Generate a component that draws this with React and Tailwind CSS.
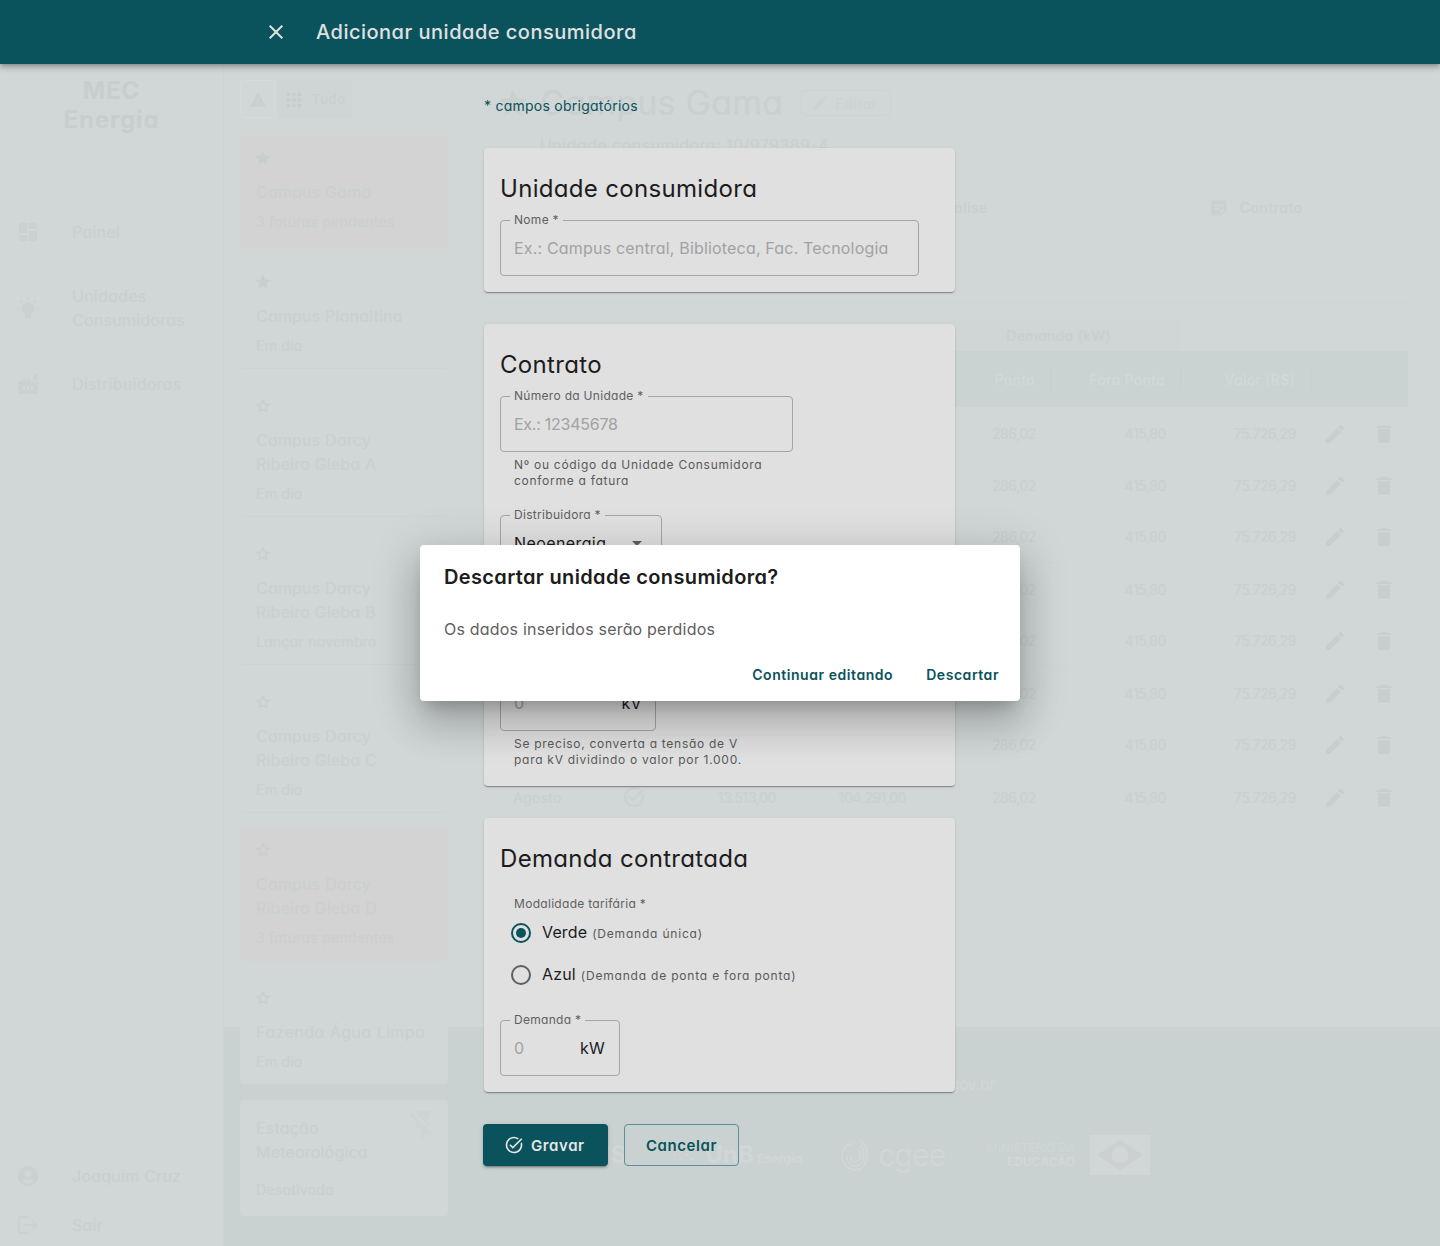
import React from "react";
import {
  MdDashboard, MdWbIncandescent, MdFactory, MdAccountCircle, MdLogout, MdWarning, MdApps, MdStar, MdStarBorder,
  MdFlashOff, MdEdit, MdDelete, MdStickyNote2, MdTaskAlt, MdClose, MdArrowDropDown, MdBarChart, MdReceiptLong,
} from "react-icons/md";

function NavItem({ icon, children, className = "" }) {
  return (
    <div className={`flex items-center pl-[16px] ${className}`}>
      <span className="w-[56px] shrink-0 text-[#cbd0d0]">{icon}</span>
      <span className="text-[16px] leading-[24px] tracking-[0.25px] text-[#cacfcf]">{children}</span>
    </div>
  );
}

function Sidebar() {
  return (
    <aside className="w-[224px] shrink-0 h-full flex flex-col border-r border-[#ced3d3]">
      <div className="pt-[76px] text-center text-[24px] leading-[29px] font-bold tracking-[0.9px] text-[#c8cdcd]">
        MEC<br />Energia
      </div>
      <NavItem className="mt-[86px]" icon={<MdDashboard className="text-[24px]" />}>Painel</NavItem>
      <NavItem className="mt-[40px]" icon={<MdWbIncandescent className="text-[24px] rotate-180" />}>Unidades<br />Consumidoras</NavItem>
      <NavItem className="mt-[40px]" icon={<MdFactory className="text-[24px]" />}>Distribuidoras</NavItem>
      <div className="flex-1" />
      <NavItem icon={<MdAccountCircle className="text-[24px]" />}>Joaquim Cruz</NavItem>
      <NavItem className="mt-[25px] mb-[9px]" icon={<MdLogout className="text-[24px]" />}>Sair</NavItem>
    </aside>
  );
}

function UnitCard({ icon, names, status, pink, line, className = "" }) {
  return (
    <div className={`px-4 rounded ${pink ? "bg-[#d3d3d3]" : ""} ${line ? "border-b border-[#cdd2d2]" : ""} ${className}`}>
      <div className="h-[20px] pt-[1px] text-[#c8cece] text-[18px] -ml-[2px]">{icon}</div>
      <div className="mt-[12px] text-[16px] leading-[24px] tracking-[0.2px] text-[#cacfcf]">
        {names.map((n) => (<div key={n}>{n}</div>))}
      </div>
      <div className="mt-[8px] text-[14px] leading-[20px] tracking-[0.25px] text-[#cacfcf]">{status}</div>
    </div>
  );
}

function UnitList() {
  return (
    <div className="relative z-10 w-[224px] shrink-0 pl-4 h-full">
      <div className="pt-[80px] flex h-[118px]">
        <div className="w-[36px] h-[38px] pt-[1px] border border-[#d6dada] rounded flex items-center justify-center">
          <MdWarning className="text-[18px] text-[#cacfcf]" />
        </div>
        <div className="w-[76px] h-[38px] pt-[2px] bg-[#cfd5d4] rounded flex items-center pl-[7px] gap-[7px]">
          <MdApps className="text-[22px] text-[#c6cecc]" />
          <span className="text-[13px] font-medium tracking-[0.6px] text-[#c8cfce]">Tudo</span>
        </div>
      </div>
      <div className="mt-[18px] flex flex-col">
        <UnitCard pink className="h-[112px] pt-[12px]" icon={<MdStar />} names={["Campus Gama"]} status="3 faturas pendentes" />
        <UnitCard line className="mt-[12px] h-[109px] pt-[12px]" icon={<MdStar />} names={["Campus Planaltina"]} status="Em dia" />
        <UnitCard line className="mt-[16px] h-[132px] pt-[11px]" icon={<MdStarBorder />} names={["Campus Darcy", "Ribeiro Gleba A"]} status="Em dia" />
        <UnitCard line className="mt-[16px] h-[132px] pt-[11px]" icon={<MdStarBorder />} names={["Campus Darcy", "Ribeiro Gleba B"]} status="Lançar novembro" />
        <UnitCard line className="mt-[16px] h-[132px] pt-[11px]" icon={<MdStarBorder />} names={["Campus Darcy", "Ribeiro Gleba C"]} status="Em dia" />
        <UnitCard pink className="mt-[15px] h-[133px] pt-[12px]" icon={<MdStarBorder />} names={["Campus Darcy", "Ribeiro Gleba D"]} status="3 faturas pendentes" />
        <div className="mt-[16px] h-[107px] pt-[12px] px-4 rounded bg-[#d1d6d6]">
          <MdStarBorder className="text-[18px] text-[#c8cece] -ml-[2px]" />
          <div className="mt-[13px] text-[16px] leading-[24px] tracking-[0.45px] text-[#cacfcf] whitespace-nowrap">Fazenda Água Limpa</div>
          <div className="mt-[8px] text-[14px] leading-[20px] tracking-[0.25px] text-[#cacfcf]">Em dia</div>
        </div>
        <div className="relative mt-[16px] h-[116px] pt-[16px] px-4 rounded bg-[#d1d6d6]">
          <MdFlashOff className="absolute right-[6px] top-[8px] text-[36px] text-[#ced4d4]" />
          <div className="text-[16px] leading-[24px] tracking-[0.2px] text-[#cacfcf]">Estação<br />Meteorológica</div>
          <div className="mt-[16px] text-[14px] leading-[20px] tracking-[0.25px] text-[#cacfcf]">Desativada</div>
        </div>
      </div>
    </div>
  );
}

const cols = "grid grid-cols-[115px_70px_122px_130px_130px_130px_130px_97px]";

function Row({ month, line }) {
  return (
    <div className={`${cols} h-[52px] items-center text-[14px] tracking-[-0.4px] text-[#cacfcf] ${line ? "border-b border-[#cfd4d4]" : ""}`}>
      <div className="pl-[29px] tracking-[0.3px]">{month}</div>
      <div className="flex justify-center"><MdTaskAlt className="text-[24px] text-[#cbd0d0]" /></div>
      <div className="text-right pr-[15px]">13.513,00</div>
      <div className="text-right pr-[15px]">104.291,00</div>
      <div className="text-right pr-[15px]">286,02</div>
      <div className="text-right pr-[15px]">415,80</div>
      <div className="text-right pr-[15px]">75.726,29</div>
      <div className="flex pt-[1px] pl-[12px] gap-[25px] text-[24px] text-[#c8cdcd]"><MdEdit /><MdDelete /></div>
    </div>
  );
}

function MainBg() {
  const months = ["Janeiro", "Fevereiro", "Março", "Abril", "Maio", "Junho", "Julho", "Agosto"];
  return (
    <main className="flex-1 pl-[36px] pr-[32px]">
      <div className="pt-[84px] flex items-center h-[122px] pl-[12px]">
        <MdStar className="text-[34px] text-[#cacfcf]" />
        <span className="ml-[10px] text-[34px] leading-[38px] tracking-[0.25px] text-[#cacfcf]">Campus Gama</span>
        <span className="ml-[18px] w-[90px] h-[26px] border border-[#cdd2d2] rounded flex items-center pl-[9px] gap-[6px] text-[14px] font-medium tracking-[0.5px] text-[#cdd2d2]">
          <MdEdit className="text-[18px]" />Editar
        </span>
      </div>
      <div className="mt-[12px] pl-[56px] text-[16px] leading-[22px] tracking-[0.45px] text-[#cacfcf]">Unidade consumidora: 10/979389-4</div>
      <div className="mt-[28px] h-[46px] pt-[2px] border-b border-[#cfd4d4] flex items-center text-[14px] font-medium tracking-[0.5px] text-[#cacfcf]">
        <span className="ml-[30px] flex items-center gap-2"><MdReceiptLong className="text-[20px]" />Faturas</span>
        <span className="ml-[310px] flex items-center gap-2"><MdBarChart className="text-[20px]" />Análise</span>
        <span className="ml-[221px] flex items-center gap-[11px]"><MdStickyNote2 className="text-[20px]" />Contrato</span>
      </div>
      <div className="h-[74px] border-b border-[#cfd4d4]" />
      <div className="mt-[15px] flex h-[32px]">
        <div className="w-[697px] h-full bg-[#d0d5d5] flex items-center justify-end pr-[70px] text-[14px] font-medium tracking-[0.3px] text-[#cacfcf]">Demanda (kW)</div>
      </div>
      <div className={`${cols} h-[56px] items-center bg-[#c9d3d1] text-[14px] font-medium tracking-[0.3px] text-[#d3d9d8]`}>
        <div className="pl-[29px]">Mês</div>
        <div />
        <div className="text-right pr-[15px] border-r border-[#c4cecc]">Medido</div>
        <div className="text-right pr-[15px] border-r border-[#c4cecc]">Fora</div>
        <div className="text-right pr-[15px] border-r border-[#c4cecc]">Ponta</div>
        <div className="text-right pr-[15px] border-r border-[#c4cecc]">Fora Ponta</div>
        <div className="text-right pr-[15px] border-r border-[#c4cecc]">Valor (R$)</div>
        <div />
      </div>
      {months.map((m, i) => (<Row key={m} month={m} line={i === 2 || i === 4 || i === 6} />))}
    </main>
  );
}

function Footer() {
  return (
    <footer className="flex-1 bg-[#c9d2d1] flex flex-col items-center">
      <div className="mt-[46px] w-[326px] text-[15px] leading-[24px] whitespace-nowrap flex justify-end text-[#d2d7d7]">Contato: mec-energia@unb.gov.br</div>
      <div className="mt-[34px] h-[48px] w-[636px] flex items-center text-[#d1d7d6]">
        <span className="w-[116px] text-[24px] font-bold text-right">LAPPIS</span>
        <svg viewBox="0 0 26 14" className="w-[26px] h-[14px] ml-[46px]" fill="currentColor">
          <circle cx="3" cy="7" r="1.3" /><circle cx="9" cy="3" r="1.3" /><circle cx="9" cy="11" r="1.3" /><circle cx="15" cy="7" r="1.3" /><circle cx="21" cy="3" r="1.3" /><circle cx="21" cy="11" r="1.3" />
        </svg>
        <span className="ml-[8px] text-[24px] font-bold">UnB</span>
        <span className="ml-[3px] mt-[8px] w-[50px] text-[12px] font-bold">Energia</span>
        <svg viewBox="0 0 30 32" className="w-[30px] h-[32px] ml-[36px]" fill="none" stroke="currentColor" strokeWidth="1.6">
          <path d="M20 1 C29 8 30 24 19 31 C8 33 1 26 1 16 C2 9 6 5 11 4" />
          <path d="M20 6 C25 12 25 22 18 27 C11 29 6 24 6 17" />
          <path d="M19 11 C21 15 20 21 16 23 C12 24 10 21 10 18" />
        </svg>
        <span className="ml-[8px] w-[78px] text-[30px] leading-[40px] font-light tracking-[-0.6px]">cgee</span>
        <span className="ml-[30px] w-[94px] text-right text-[12px] leading-[14px]">
          <span className="block whitespace-nowrap font-light">MINISTÉRIO DA</span>
          <span className="block font-bold">EDUCAÇÃO</span>
        </span>
        <span className="ml-[15px] w-[60px] h-[40px] bg-[#d2d6d6] flex items-center justify-center">
          <svg viewBox="0 0 60 40" className="w-[60px] h-[40px]">
            <path d="M30 5 L53 20 L30 35 L7 20 Z" fill="#c9d2d1" />
            <circle cx="30" cy="20" r="8.5" fill="#d2d6d6" />
          </svg>
        </span>
      </div>
    </footer>
  );
}

function Field({ label, className = "", children }) {
  return (
    <div className={`relative h-[56px] border border-[#a5a5a5] rounded flex items-center pl-[13px] ${className}`}>
      <span className="absolute left-[9px] -top-[10px] bg-[#e0e0e0] px-[4px] text-[12px] leading-[18px] tracking-[0.3px] text-[#5f5f5f] whitespace-nowrap">{label}</span>
      {children}
    </div>
  );
}

const helper = "pl-[14px] mt-[5px] text-[12px] leading-[16px] tracking-[0.72px] text-[#5a5a5a]";
const cardCls = "bg-[#e0e0e0] rounded px-4 shadow-[0_2px_1px_-1px_rgba(0,0,0,0.2),0_1px_1px_0_rgba(0,0,0,0.14),0_1px_3px_0_rgba(0,0,0,0.12)]";
const titleCls = "text-[24px] leading-[32px] tracking-[0.32px] text-[#1c1c1c]";

function Radio({ checked, name, note }) {
  return (
    <div className="h-[42px] flex items-center pl-[11px]">
      <span className={`w-[20px] h-[20px] rounded-full border-2 flex items-center justify-center ${checked ? "border-[#0a525c]" : "border-[#5f5f5f]"}`}>
        {checked && <span className="w-[10px] h-[10px] rounded-full bg-[#0a525c]" />}
      </span>
      <span className="ml-[11px] text-[16px] tracking-[0.15px] text-[#1c1c1c] -mt-[2px]">{name}</span>
      <span className="ml-[5px] mt-[2px] text-[12px] tracking-[0.8px] text-[#5a5a5a]">{note}</span>
    </div>
  );
}

function FormOverlay() {
  return (
    <div className="absolute inset-0 z-20 flex flex-col">
      <header className="h-[64px] shrink-0 bg-[#0a525c] flex items-center pl-[264px] shadow-[0_2px_4px_-1px_rgba(0,0,0,0.2),0_4px_5px_0_rgba(0,0,0,0.14),0_1px_10px_0_rgba(0,0,0,0.12)]">
        <MdClose className="text-[24px] text-[#e0e0e0]" />
        <h1 className="ml-[28px] text-[20px] font-medium tracking-[0.5px] text-[#e0e0e0]">Adicionar unidade consumidora</h1>
      </header>
      <div className="ml-[484px] w-[471px] pt-[32px]">
        <div className="h-[20px] text-[14px] leading-[20px] tracking-[0.25px] text-[#0a525c] whitespace-nowrap">* campos obrigatórios</div>
        <section className={`mt-[32px] pt-[25px] pb-[16px] ${cardCls}`}>
          <h2 className={titleCls}>Unidade consumidora</h2>
          <Field label="Nome *" className="mt-[15px] w-[419px]">
            <span className="text-[16px] tracking-[0.18px] text-[#a2a2a2] whitespace-nowrap">Ex.: Campus central, Biblioteca, Fac. Tecnologia</span>
          </Field>
        </section>
        <section className={`mt-[32px] pt-[25px] pb-[18px] ${cardCls}`}>
          <h2 className={titleCls}>Contrato</h2>
          <Field label="Número da Unidade *" className="mt-[15px] w-[293px]">
            <span className="text-[16px] tracking-[-0.25px] text-[#a2a2a2]">Ex.: 12345678</span>
          </Field>
          <p className={helper}>Nº ou código da Unidade Consumidora<br />conforme a fatura</p>
          <Field label="Distribuidora *" className="mt-[26px] w-[162px]">
            <span className="text-[16px] tracking-[0.4px] text-[#1c1c1c]">Neoenergia</span>
            <MdArrowDropDown className="absolute right-[12px] text-[24px] text-[#5f5f5f]" />
          </Field>
          <Field label="Tensão de fornecimento *" className="mt-[104px] w-[156px] pr-[13px] justify-between">
            <span className="text-[16px] text-[#a2a2a2]">0</span>
            <span className="text-[16px] tracking-[0.4px] text-[#1c1c1c]">kV</span>
          </Field>
          <p className={helper}>Se preciso, converta a tensão de V<br />para kV dividindo o valor por 1.000.</p>
        </section>
        <section className={`mt-[32px] pt-[25px] pb-[16px] ${cardCls}`}>
          <h2 className={titleCls}>Demanda contratada</h2>
          <div className="mt-[21px] pl-[14px] text-[12px] leading-[16px] tracking-[0.3px] text-[#5f5f5f]">Modalidade tarifária *</div>
          <Radio checked name="Verde" note="(Demanda única)" />
          <Radio name="Azul" note="(Demanda de ponta e fora ponta)" />
          <Field label="Demanda *" className="mt-[24px] w-[120px] pr-[14px] justify-between">
            <span className="text-[16px] text-[#a2a2a2]">0</span>
            <span className="text-[16px] tracking-[0.2px] text-[#1c1c1c]">kW</span>
          </Field>
        </section>
        <div className="mt-[32px] -ml-[1px] flex gap-[16px]">
          <button className="w-[125px] h-[42px] pt-[2px] rounded bg-[#0a525c] flex items-center pl-[21px] gap-[7px] text-[15px] font-semibold tracking-[0.6px] text-[#e5e5e5] shadow-[0_3px_1px_-2px_rgba(0,0,0,0.2),0_2px_2px_0_rgba(0,0,0,0.14),0_1px_5px_0_rgba(0,0,0,0.12)]">
            <MdTaskAlt className="text-[20px] -mt-[2px]" />Gravar
          </button>
          <button className="w-[115px] h-[42px] pt-[2px] rounded border border-[#5d9098] text-[15px] font-semibold tracking-[0.6px] text-[#0a525c]">Cancelar</button>
        </div>
      </div>
    </div>
  );
}

function Dialog() {
  return (
    <div className="absolute z-30 left-[420px] top-[545px] w-[600px] h-[156px] bg-white rounded pt-[16px] shadow-[0_11px_15px_-7px_rgba(0,0,0,0.2),0_24px_38px_3px_rgba(0,0,0,0.14),0_9px_46px_8px_rgba(0,0,0,0.12)]">
      <h2 className="pl-[24px] text-[20px] leading-[32px] font-semibold tracking-[0.35px] text-[#1c1c1c]">Descartar unidade consumidora?</h2>
      <p className="mt-[24px] pl-[24px] text-[16px] leading-[24px] tracking-[0.2px] text-[#5f5f5f]">Os dados inseridos serão perdidos</p>
      <div className="mt-[15px] h-[36px] flex items-center justify-end pr-[21px] gap-[33px] text-[14px] font-semibold tracking-[0.55px] text-[#0a525c]">
        <button>Continuar editando</button>
        <button>Descartar</button>
      </div>
    </div>
  );
}

export default function App() {
  return (
    <div className="relative w-[1440px] h-[1246px] overflow-hidden bg-[#d1d6d6] [font-family:Inter,'Noto_Sans',sans-serif] [font-feature-settings:'cv11']">
      <div className="flex h-full">
        <Sidebar />
        <div className="flex-1 flex flex-col h-full">
          <div className="flex h-[1027px] shrink-0">
            <UnitList />
            <MainBg />
          </div>
          <Footer />
        </div>
      </div>
      <FormOverlay />
      <Dialog />
    </div>
  );
}
